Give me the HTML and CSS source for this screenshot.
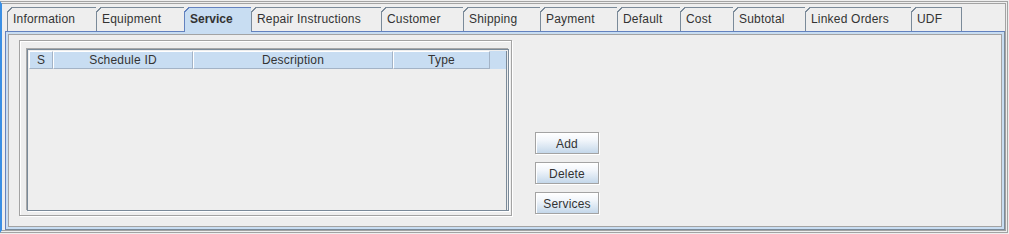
FILE: index.html
```html
<!DOCTYPE html>
<html lang="en">

<head>
    <meta charset="UTF-8">
    <title>Order - Service</title>
    <link rel="stylesheet" href="styles.css">
</head>

<body>
    <div class="window">
        <div class="tabs">
            <div class="tab" style="width: 89px">Information</div>
            <div class="tab" style="width: 88px">Equipment</div>
            <div class="tab selected" style="width: 67px">Service</div>
            <div class="tab" style="width: 130px">Repair Instructions</div>
            <div class="tab" style="width: 82px">Customer</div>
            <div class="tab" style="width: 77px">Shipping</div>
            <div class="tab" style="width: 77px">Payment</div>
            <div class="tab" style="width: 63px">Default</div>
            <div class="tab" style="width: 53px">Cost</div>
            <div class="tab" style="width: 72px">Subtotal</div>
            <div class="tab" style="width: 106px">Linked Orders</div>
            <div class="tab last" style="width: 51px">UDF</div>
        </div>

        <div class="content">
            <div class="panel">
                <div class="group">
                    <div class="scroll">
                        <div class="table-header">
                            <div class="th" style="width: 24px">S</div>
                            <div class="th" style="width: 140px">Schedule ID</div>
                            <div class="th" style="width: 200px">Description</div>
                            <div class="th" style="width: 97px">Type</div>
                            <div class="th filler"></div>
                        </div>
                        <div class="table-body"></div>
                    </div>
                </div>

                <div class="buttons">
                    <button class="btn">Add</button>
                    <button class="btn">Delete</button>
                    <button class="btn">Services</button>
                </div>
            </div>
        </div>
    </div>
</body>

</html>
```

FILE: styles.css
```css
* {
    box-sizing: border-box;
    margin: 0;
    padding: 0;
}

body {
    font-family: "Liberation Sans", Arial, sans-serif;
    font-size: 12px;
    letter-spacing: 0.2px;
    color: #333;
    background-color: #eeeeee;
    width: 1009px;
    height: 234px;
    overflow: hidden;
}

.window {
    margin: 1px 1px 1px 0;
    height: 232px;
    border: 3px double #a3a3a3;
    border-left: 2px solid #3a8fe4;
    padding: 3px 0 0 3px;
    display: flex;
    flex-direction: column;
}

/* tab strip */
.tabs {
    display: flex;
    height: 24px;
    margin-left: 2px;
    position: relative;
    z-index: 1;
}

.tab {
    position: relative;
    height: 24px;
    padding: 4px 0 0 5px;
    border-top: 1px solid #7a8a99;
    border-left: 1px solid #7a8a99;
    background-color: #eeeeee;
    white-space: nowrap;
}

.tab::before {
    /* chamfered top-left corner */
    content: "";
    position: absolute;
    top: -1px;
    left: -1px;
    width: 7px;
    height: 7px;
    background: linear-gradient(135deg, #eeeeee 3.5px, #7a8a99 3.5px, #7a8a99 4.8px, transparent 4.8px);
}

.tab.last {
    border-right: 1px solid #7a8a99;
}

.tab.selected {
    background-color: #c8ddf2;
    border-color: #6382bf;
    font-weight: bold;
    letter-spacing: 0;
    height: 25px;
    margin-bottom: -1px;
}

.tab.selected::before {
    background: linear-gradient(135deg, #eeeeee 3.5px, #6382bf 3.5px, #6382bf 4.8px, transparent 4.8px);
}

/* tab content */
.content {
    flex: 1;
    border: 1px solid #6382bf;
    border-right-color: #7a8a99;
    border-bottom-color: #7a8a99;
    padding: 2px;
    background-color: #c8ddf2;
    display: flex;
}

.panel {
    flex: 1;
    display: flex;
    align-items: flex-start;
    border: 1px solid #a3a3a3;
    background-color: #eeeeee;
    padding: 5px 0 0 10px;
}

.group {
    width: 493px;
    height: 176px;
    border: 1px solid #a3a3a3;
    box-shadow: inset 1px 1px 0 #fff, 1px 1px 0 #fff;
    padding: 8px 0 0 7px;
}

.scroll {
    width: 482px;
    height: 162px;
    border: 1px solid #7a8a99;
    box-shadow: -1px -1px 0 #a8a8a8, 1px 1px 0 #fff;
    padding: 1px 0 0 1px;
}

.table-header {
    display: flex;
    height: 18px;
}

.th {
    height: 18px;
    line-height: 17px;
    text-align: center;
    background-color: #c8ddf2;
    border-left: 1px solid #fff;
    border-top: 1px solid #fff;
    border-right: 1px solid #a3b3c6;
    border-bottom: 1px solid #a3b3c6;
}

.th.filler {
    width: 17px;
    border: none;
    border-right: 1px solid #7a8a99;
}

.table-body {
    width: 478px;
    height: 141px;
    border-right: 1px solid #7a8a99;
}

/* buttons */
.buttons {
    align-self: flex-end;
    display: flex;
    flex-direction: column;
    gap: 8px;
    margin: 0 0 12px 23px;
}

.btn {
    width: 64px;
    height: 22px;
    padding-top: 1px;
    font-family: "Liberation Sans", Arial, sans-serif;
    font-size: 12px;
    letter-spacing: 0.2px;
    color: #333;
    border: 1px solid #a3a3a3;
    box-shadow: 1px 1px 0 #fff, inset 1px 1px 0 #fff;
    background: linear-gradient(to bottom, #ffffff 0%, #f2f6fb 35%, #dae6f2 70%, #c4d7ea 100%);
}
```
